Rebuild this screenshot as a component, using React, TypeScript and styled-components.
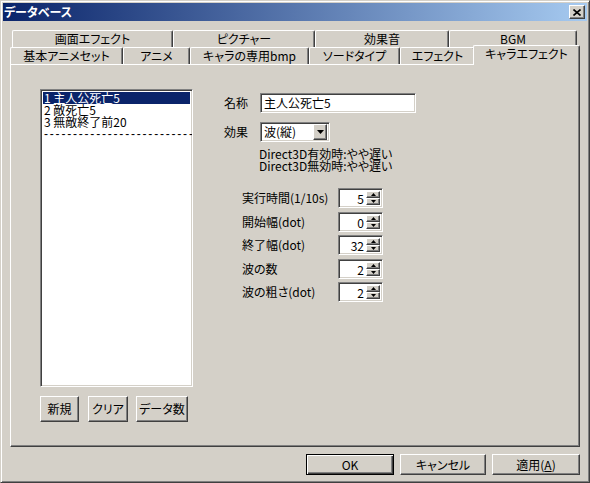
import React from "react";
import styled, { createGlobalStyle, css } from "styled-components";

const GlobalStyle = createGlobalStyle`
  html, body {
    margin: 0;
    padding: 0;
    background: #d4d0c8;
  }
  body {
    width: 590px;
    height: 483px;
    overflow: hidden;
    font-family: "Noto Sans CJK JP", "Noto Sans", sans-serif;
    font-size: 12px;
    font-feature-settings: "palt";
    color: #000;
  }
  * {
    box-sizing: border-box;
  }
`;

const raised = css`
  border: 1px solid;
  border-color: #fff #404040 #404040 #fff;
  box-shadow: inset -1px -1px #808080, inset 1px 1px #d4d0c8;
`;

const sunken = css`
  border: 1px solid;
  border-color: #808080 #fff #fff #808080;
  box-shadow: inset 1px 1px #404040, inset -1px -1px #d4d0c8;
`;

const Window = styled.div`
  width: 590px;
  height: 483px;
  display: flex;
  flex-direction: column;
  background: #d4d0c8;
  border: 1px solid;
  border-color: #d4d0c8 #404040 #404040 #d4d0c8;
  box-shadow: inset 1px 1px #fff, inset -1px -1px #808080;
  padding: 2px;
`;

const TitleBar = styled.div`
  height: 18px;
  display: flex;
  align-items: center;
  justify-content: space-between;
  padding: 0 2px 0 1px;
  background: linear-gradient(to right, #0a246a, #a6caf0);
  color: #fff;
  font-weight: bold;
  line-height: 18px;
`;

const CloseButton = styled.div`
  width: 16px;
  height: 14px;
  display: flex;
  align-items: center;
  justify-content: center;
  background: #d4d0c8;
  ${raised}
`;

const Body = styled.div`
  display: flex;
  flex-direction: column;
  padding: 9px 7px 0 7px;
`;

const TabRow = styled.div<{ $indent: number; $h: number }>`
  display: flex;
  height: ${(p) => p.$h}px;
  padding-left: ${(p) => p.$indent}px;
`;

const Tab = styled.div<{ $w: number; $active?: boolean }>`
  position: relative;
  flex: 0 0 ${(p) => p.$w}px;
  display: flex;
  align-items: center;
  justify-content: center;
  line-height: 14px;
  background: #d4d0c8;
  border-top: 1px solid #fff;
  border-left: 1px solid #fff;
  border-right: 1px solid #404040;
  box-shadow: inset -1px 0 #808080;
  border-top-left-radius: 2px;
  border-top-right-radius: 2px;
  white-space: nowrap;
  ${(p) =>
    p.$active &&
    css`
      z-index: 2;
      flex-basis: ${p.$w + 2}px;
      margin: -2px 0 -1px -2px;
      padding-bottom: 3px;
    `}
`;

const Panel = styled.div`
  height: 383px;
  ${raised}
  box-shadow: inset -1px -1px #808080;
  display: flex;
  padding: 24px 0 0 29px;
`;

const LeftCol = styled.div`
  width: 153px;
  display: flex;
  flex-direction: column;
`;

const ListBox = styled.div`
  height: 298px;
  background: #fff;
  ${sunken}
  padding: 2px;
  overflow: hidden;
`;

const ListItem = styled.div<{ $selected?: boolean }>`
  height: 12px;
  line-height: 12px;
  padding-left: 1px;
  white-space: nowrap;
  background: ${(p) => (p.$selected ? "#0a246a" : "transparent")};
  color: ${(p) => (p.$selected ? "#fff" : "#000")};
`;

const Dashes = styled(ListItem)`
  font-family: "Liberation Sans", sans-serif;
  letter-spacing: 1.8px;
`;

const ListButtons = styled.div`
  display: flex;
  margin-top: 9px;
  gap: 8px;
`;

const PushButton = styled.button<{ $w: number; $h: number; $default?: boolean }>`
  width: ${(p) => p.$w}px;
  height: ${(p) => p.$h}px;
  padding: 0;
  background: #d4d0c8;
  font: inherit;
  line-height: 14px;
  color: #000;
  ${raised}
  ${(p) =>
    p.$default &&
    css`
      border: 1px solid #000;
      box-shadow: inset 1px 1px #fff, inset -1px -1px #404040, inset -2px -2px #808080;
    `}
`;

const RightCol = styled.div`
  display: flex;
  flex-direction: column;
  margin-left: 31px;
  padding-top: 4px;
`;

const FieldRow = styled.div<{ $gap?: number }>`
  display: flex;
  align-items: center;
  margin-top: ${(p) => p.$gap ?? 0}px;
`;

const FieldLabel = styled.div<{ $w: number }>`
  width: ${(p) => p.$w}px;
  line-height: 14px;
  white-space: nowrap;
`;

const TextField = styled.div<{ $w: number; $h: number }>`
  width: ${(p) => p.$w}px;
  height: ${(p) => p.$h}px;
  background: #fff;
  ${sunken}
  display: flex;
  align-items: center;
  padding: 0 3px;
  line-height: 14px;
  white-space: nowrap;
`;

const Select = styled(TextField)`
  justify-content: space-between;
  padding: 2px;
`;

const DropButton = styled.div`
  width: 14px;
  height: 16px;
  display: flex;
  align-items: center;
  justify-content: center;
  background: #d4d0c8;
  ${raised}
`;

const Note = styled.div`
  margin: 6px 0 0 35px;
  line-height: 11.5px;
  white-space: nowrap;
`;

const SpinList = styled.div`
  display: flex;
  flex-direction: column;
  gap: 3.5px;
  margin: 17px 0 0 18px;
`;

const SpinField = styled.div`
  width: 45px;
  height: 20px;
  background: #fff;
  ${sunken}
  display: flex;
  align-items: stretch;
  padding: 2px;
`;

const SpinValue = styled.div`
  flex: 1;
  text-align: right;
  line-height: 16px;
  padding-right: 2px;
`;

const SpinButtons = styled.div`
  width: 14px;
  display: flex;
  flex-direction: column;
`;

const SpinButton = styled.div`
  flex: 1;
  display: flex;
  align-items: center;
  justify-content: center;
  background: #d4d0c8;
  ${raised}
`;

const Footer = styled.div`
  display: flex;
  justify-content: flex-end;
  gap: 6px;
  margin-top: 7px;
`;

const Tri = ({ dir, w, h }: { dir: "up" | "down"; w: number; h: number }) => (
  <svg width={w} height={h} viewBox={`0 0 ${w} ${h}`}>
    <polygon
      points={dir === "down" ? `0,0 ${w},0 ${w / 2},${h}` : `0,${h} ${w},${h} ${w / 2},0`}
      fill="#000"
    />
  </svg>
);

const backTabs = [
  { label: "画面エフェクト", w: 161 },
  { label: "ピクチャー", w: 142 },
  { label: "効果音", w: 134 },
  { label: "BGM", w: 128 },
];

const frontTabs = [
  { label: "基本アニメセット", w: 113 },
  { label: "アニメ", w: 67 },
  { label: "キャラの専用bmp", w: 119 },
  { label: "ソードタイプ", w: 91 },
  { label: "エフェクト", w: 75 },
  { label: "キャラエフェクト", w: 105, active: true },
];

const items = ["1 主人公死亡5", "2 敵死亡5", "3 無敵終了前20"];

const spins = [
  { label: "実行時間(1/10s)", value: "5" },
  { label: "開始幅(dot)", value: "0" },
  { label: "終了幅(dot)", value: "32" },
  { label: "波の数", value: "2" },
  { label: "波の粗さ(dot)", value: "2" },
];

export default function App() {
  return (
    <>
      <GlobalStyle />
      <Window>
        <TitleBar>
          <span>データベース</span>
          <CloseButton>
            <svg width="8" height="7" viewBox="0 0 8 7">
              <path d="M0.5 0.5 L7.5 6.5 M7.5 0.5 L0.5 6.5" stroke="#000" strokeWidth="1.6" />
            </svg>
          </CloseButton>
        </TitleBar>
        <Body>
          <TabRow $indent={2} $h={17}>
            {backTabs.map((t) => (
              <Tab key={t.label} $w={t.w}>
                {t.label}
              </Tab>
            ))}
          </TabRow>
          <TabRow $indent={0} $h={17}>
            {frontTabs.map((t) => (
              <Tab key={t.label} $w={t.w} $active={t.active}>
                {t.label}
              </Tab>
            ))}
          </TabRow>
          <Panel>
            <LeftCol>
              <ListBox>
                {items.map((it, i) => (
                  <ListItem key={it} $selected={i === 0}>
                    {it}
                  </ListItem>
                ))}
                <Dashes>{"-".repeat(40)}</Dashes>
              </ListBox>
              <ListButtons>
                <PushButton $w={39} $h={26}>新規</PushButton>
                <PushButton $w={40} $h={26} style={{ marginLeft: 1 }}>クリア</PushButton>
                <PushButton $w={52} $h={26}>データ数</PushButton>
              </ListButtons>
            </LeftCol>
            <RightCol>
              <FieldRow>
                <FieldLabel $w={36}>名称</FieldLabel>
                <TextField $w={156} $h={20}>主人公死亡5</TextField>
              </FieldRow>
              <FieldRow $gap={9}>
                <FieldLabel $w={36}>効果</FieldLabel>
                <Select $w={70} $h={20}>
                  <span style={{ paddingLeft: 1 }}>波(縦)</span>
                  <DropButton>
                    <Tri dir="down" w={7} h={4} />
                  </DropButton>
                </Select>
              </FieldRow>
              <Note>
                Direct3D有効時:やや遅い
                <br />
                Direct3D無効時:やや遅い
              </Note>
              <SpinList>
                {spins.map((s) => (
                  <FieldRow key={s.label}>
                    <FieldLabel $w={96}>{s.label}</FieldLabel>
                    <SpinField>
                      <SpinValue>{s.value}</SpinValue>
                      <SpinButtons>
                        <SpinButton>
                          <Tri dir="up" w={5} h={3} />
                        </SpinButton>
                        <SpinButton>
                          <Tri dir="down" w={5} h={3} />
                        </SpinButton>
                      </SpinButtons>
                    </SpinField>
                  </FieldRow>
                ))}
              </SpinList>
            </RightCol>
          </Panel>
          <Footer>
            <PushButton $w={88} $h={21} $default>OK</PushButton>
            <PushButton $w={86} $h={21}>キャンセル</PushButton>
            <PushButton $w={88} $h={21}>
              適用(<u>A</u>)
            </PushButton>
          </Footer>
        </Body>
      </Window>
    </>
  );
}
